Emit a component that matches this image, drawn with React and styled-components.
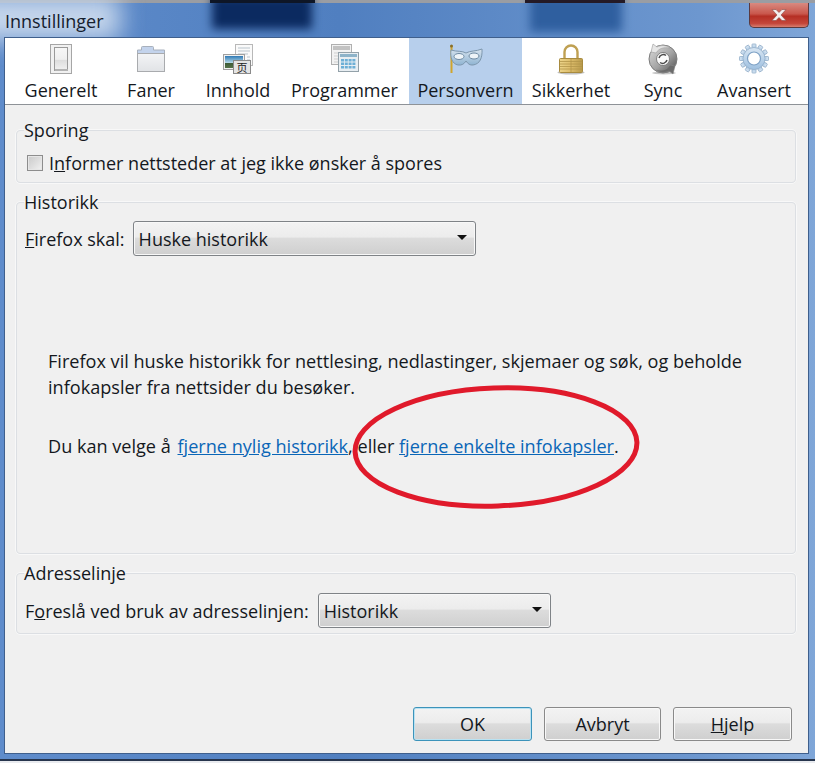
import React from 'react';
import styled, { createGlobalStyle } from 'styled-components';

const GlobalStyle = createGlobalStyle`
  html, body { margin: 0; padding: 0; background: #dfe3ea; }
  body { font-family: "Open Sans", "Noto Sans", sans-serif; color: #111; }
`;

const Desktop = styled.div`
  position: relative;
  width: 815px;
  height: 763px;
  overflow: hidden;
  box-sizing: border-box;
  padding: 3px 7px 3px 5px;
  background:
    linear-gradient(#9a9da3 0 3px, transparent 3px),
    linear-gradient(#e9ebef, #e9ebef) 0 761px / 100% 2px no-repeat,
    linear-gradient(#27354d, #27354d) 0 759px / 100% 2px no-repeat,
    linear-gradient(90deg, #5f8ccb, #507fc0 340px, #6d97cf 700px, #7fa6d8);
`;

// blurred desktop picture that shows through the glass title bar
const Blotch = styled.div`
  position: absolute;
  left: ${({ $x }) => $x}px;
  top: -4px;
  width: ${({ $w }) => $w}px;
  height: ${({ $h }) => $h}px;
  background: ${({ $c }) => $c};
  filter: blur(${({ $blur }) => $blur || 5}px);
`;

const TopEdge = styled.div`
  position: absolute;
  left: ${({ $x }) => $x}px;
  top: 0;
  width: ${({ $w }) => $w}px;
  height: 3px;
  background: ${({ $c }) => $c};
`;

const TitleBar = styled.div`
  position: relative;
  height: 35px;
  display: flex;
  align-items: flex-start;
  justify-content: space-between;
`;

const Title = styled.div`
  font-size: 18px;
  line-height: 36px;
  color: #15202e;
`;

const CloseButton = styled.div`
  width: 60px;
  height: 25px;
  margin-right: -1px;
  box-sizing: border-box;
  display: flex;
  align-items: center;
  justify-content: center;
  border: 1px solid #5a3a3f;
  border-top: none;
  border-radius: 0 0 5px 5px;
  background: linear-gradient(#d98a80 0, #c9574c 45%, #b52f24 55%, #c4463a 85%, #d77f70 100%);
`;

const Client = styled.div`
  position: relative;
  height: 715px;
  display: flex;
  flex-direction: column;
  background: #f0f0f0;
  box-shadow: 0 0 0 1px #3f5f8c;
`;

const Toolbar = styled.div`
  display: flex;
  height: 66px;
  padding-left: 11px;
  background: #fff;
  border-bottom: 1px solid #8e9297;
`;

const ToolItem = styled.div`
  width: ${({ $w }) => $w}px;
  display: flex;
  flex-direction: column;
  align-items: center;
  background: ${({ $active }) => ($active ? '#b7cfec' : 'transparent')};
  svg { display: block; margin-top: 5px; }
`;

const ToolLabel = styled.span`
  font-size: 18px;
  line-height: 24px;
  margin-top: 3px;
  white-space: nowrap;
  color: #14181d;
`;

const Panel = styled.div`
  flex: 1;
  display: flex;
  flex-direction: column;
  padding: 12px 12px 12px 11px;
  gap: 6px;
`;

const Group = styled.fieldset`
  margin: 0;
  padding: ${({ $top }) => $top}px 8px 0;
  height: ${({ $h }) => $h}px;
  box-sizing: border-box;
  min-width: 0;
  border: 1px solid #dcdfe3;
  border-radius: 4px;
  box-shadow: 0 0 0 0.5px #fff;
`;

const Legend = styled.legend`
  padding: 0;
  margin-left: -1px;
  font-size: 18px;
  line-height: 26px;
  color: #14181d;
`;

const Row = styled.div`
  display: flex;
  align-items: center;
  gap: ${({ $gap }) => $gap || 8}px;
  font-size: 18px;
  line-height: 24px;
  color: #14181d;
  white-space: nowrap;
`;

const Check = styled.span`
  width: 16px;
  height: 16px;
  margin-left: 2px;
  box-sizing: border-box;
  border: 1px solid #8d8d8d;
  background: linear-gradient(135deg, #c9c9c9, #f1f1f1);
  box-shadow: inset 0 0 0 1px #e6e6e6;
`;

const Select = styled.div`
  width: ${({ $w }) => $w}px;
  height: 35px;
  box-sizing: border-box;
  padding: 0 8px 0 5px;
  display: flex;
  align-items: center;
  justify-content: space-between;
  border: 1px solid #7f8387;
  border-radius: 3px;
  background: linear-gradient(#f3f3f3 0, #ececec 45%, #dcdcdc 50%, #cfcfcf 100%);
  box-shadow: inset 0 0 0 1px #f8f8f8;
  font-size: 18px;
`;

const Arrow = styled.span`
  width: 0;
  height: 0;
  margin-top: -3px;
  border-left: 5px solid transparent;
  border-right: 5px solid transparent;
  border-top: 5px solid #111;
`;

const Info = styled.div`
  margin: 92px 0 0 23px;
  font-size: 18.1px;
  line-height: 26px;
  color: #14181d;
`;

const Para = styled.p`
  margin: 0 0 33px;
  white-space: nowrap;
`;

const Link = styled.a`
  margin-left: ${({ $ml }) => $ml || 0}px;
  color: #0a66b7;
  text-decoration: underline;
`;

const Footer = styled.div`
  display: flex;
  justify-content: flex-end;
  gap: 12px;
  margin-top: auto;
  padding-right: 4px;
`;

const Button = styled.div`
  width: ${({ $w }) => $w}px;
  height: 34px;
  box-sizing: border-box;
  display: flex;
  align-items: center;
  justify-content: center;
  border: 1px solid ${({ $primary }) => ($primary ? '#3c93ba' : '#8a8a8a')};
  border-radius: 3px;
  background: linear-gradient(#f3f3f3 0, #ececec 45%, #dcdcdc 50%, #cfcfcf 100%);
  box-shadow: inset 0 0 0 1px ${({ $primary }) => ($primary ? '#b9e2f2' : '#f8f8f8')};
  font-size: 18px;
  color: #14181d;
`;

const Ellipse = styled.svg`
  position: absolute;
  left: 345px;
  top: 378px;
  pointer-events: none;
`;

const SwitchIcon = () => (
  <svg width="32" height="32" viewBox="0 0 32 32">
    <defs>
      <linearGradient id="sw" x1="0" y1="0" x2="0" y2="1">
        <stop offset="0" stopColor="#f7f7f7" />
        <stop offset="0.52" stopColor="#efefef" />
        <stop offset="0.53" stopColor="#dcdcdc" />
        <stop offset="1" stopColor="#f2f2f2" />
      </linearGradient>
    </defs>
    <rect x="5.500" y="1.500" width="21" height="29" fill="#f1f1f1" stroke="#a6a6a6" />
    <rect x="9.500" y="4.500" width="13" height="23" fill="url(#sw)" stroke="#9a9a9a" />
    <rect x="10" y="26" width="13" height="2" fill="#b3b3b3" />
  </svg>
);

const FolderIcon = () => (
  <svg width="32" height="32" viewBox="0 0 32 32">
    <defs>
      <linearGradient id="fo" x1="0" y1="0" x2="0" y2="1">
        <stop offset="0" stopColor="#f3f4f6" />
        <stop offset="1" stopColor="#e1e3e6" />
      </linearGradient>
    </defs>
    <path d="M6.500 7V4.500a1 1 0 0 1 1-1h10a1 1 0 0 1 1 1V7h11v4h-27V7z" fill="#c3d3ec" stroke="#a8b0bc" />
    <rect x="2.500" y="10.500" width="27" height="18" fill="url(#fo)" stroke="#a9abae" />
  </svg>
);

const ContentIcon = () => (
  <svg width="32" height="32" viewBox="0 0 32 32">
    <defs>
      <linearGradient id="ph" x1="0" y1="0" x2="0" y2="1">
        <stop offset="0" stopColor="#2f79b5" />
        <stop offset="0.55" stopColor="#b3d8e6" />
        <stop offset="0.6" stopColor="#3c5b36" />
        <stop offset="1" stopColor="#56734a" />
      </linearGradient>
    </defs>
    <rect x="13.500" y="1.500" width="17" height="21" fill="#fafafa" stroke="#b8b8b8" />
    <path d="M16 5h12M16 8h12M16 11h10M25 14h3M25 17h3" stroke="#b9c4cc" />
    <rect x="1.500" y="11.500" width="21" height="15" fill="#f2f2f2" stroke="#a0a0a0" />
    <rect x="3" y="13" width="18" height="12" fill="url(#ph)" />
    <rect x="11.500" y="17.500" width="17" height="13" fill="#e4e4e4" stroke="#8a8a8a" />
    <text x="20" y="28.500" fontSize="11" textAnchor="middle" fontFamily="Noto Sans CJK SC, sans-serif" fill="#222">页</text>
  </svg>
);

const AppsIcon = () => (
  <svg width="32" height="32" viewBox="0 0 32 32">
    <rect x="2.500" y="1.500" width="20" height="20" fill="#f2f2f2" stroke="#b0b0b0" />
    <rect x="4" y="3" width="17" height="4" fill="#c2c2c2" />
    <path d="M5 10h4M5 13h4M5 16h4M5 19h4" stroke="#cfcfcf" />
    <rect x="9.500" y="9.500" width="20" height="19" fill="#e8eef2" stroke="#93a1a9" />
    <rect x="11" y="11" width="17" height="3" fill="#8db3c9" />
    <g fill="#6dafd6">
      {[0, 1, 2].map((r) =>
        [0, 1, 2, 3].map((c) => (
          <rect key={`${r}-${c}`} x={12 + c * 3.8} y={16 + r * 3.5} width="3" height="2.500" />
        ))
      )}
    </g>
  </svg>
);

const MaskIcon = () => (
  <svg width="34" height="32" viewBox="0 0 34 32">
    <defs>
      <linearGradient id="ma" x1="0" y1="0" x2="0" y2="1">
        <stop offset="0" stopColor="#d7e3ee" />
        <stop offset="1" stopColor="#8fb4d2" />
      </linearGradient>
    </defs>
    <path d="M2.500 3v27" stroke="#d0a52c" strokeWidth="2" />
    <circle cx="2.500" cy="3" r="1.500" fill="#8a6f28" />
    <path d="M2 7c6 2 11 .5 15 3 4-2.500 10-1.500 16-4 .5 9-2 15-9 16-3 .4-5-1-7-4-2 3-4 4.500-8 4-6-1-8-8-7-15z" fill="url(#ma)" stroke="#7d97ad" />
    <ellipse cx="10" cy="13.500" rx="5" ry="3" fill="#eef4f8" stroke="#6f8ba3" />
    <ellipse cx="25" cy="13" rx="5" ry="3" fill="#eef4f8" stroke="#6f8ba3" />
  </svg>
);

const LockIcon = () => (
  <svg width="32" height="32" viewBox="0 0 32 32">
    <defs>
      <linearGradient id="lo" x1="0" y1="0" x2="1" y2="0">
        <stop offset="0" stopColor="#ecd48a" />
        <stop offset="0.5" stopColor="#dcbc6a" />
        <stop offset="1" stopColor="#b89a4c" />
      </linearGradient>
    </defs>
    <ellipse cx="16" cy="29.500" rx="13.500" ry="2" fill="#c2c2c2" />
    <path d="M9.500 16V9a6.500 6.500 0 0 1 13 0v7" fill="none" stroke="#bfa052" strokeWidth="2.400" />
    <rect x="4.500" y="15.500" width="23" height="14" rx="1" fill="url(#lo)" stroke="#a88b3f" />
    <path d="M5 18.500h22M5 21h22M5 23.500h22M5 26h22M16 16v13" stroke="#b3954a" strokeWidth="0.800" />
  </svg>
);

const SyncIcon = () => (
  <svg width="32" height="32" viewBox="0 0 32 32">
    <defs>
      <linearGradient id="sy" x1="0" y1="0" x2="1" y2="1">
        <stop offset="0" stopColor="#dedede" />
        <stop offset="0.55" stopColor="#a2a2a2" />
        <stop offset="1" stopColor="#4a4a4a" />
      </linearGradient>
    </defs>
    <ellipse cx="17" cy="30" rx="12" ry="1.500" fill="#c6c6c6" />
    <circle cx="16" cy="16" r="14" fill="url(#sy)" stroke="#7c7c7c" />
    <path d="M4 9L6 1l4 3c4-2 9-2 13 1-6-1-11 0-14 5z" fill="#e6e6e6" stroke="#9a9a9a" strokeWidth="0.600" />
    <path d="M28 23l-2 8-4-3c-4 2-9 2-13-1 6 1 11 0 14-5z" fill="#6b6b6b" stroke="#8a8a8a" strokeWidth="0.600" />
    <circle cx="16" cy="16" r="6.500" fill="#fbfbfb" stroke="#6c6c6c" strokeWidth="0.800" />
    <path d="M12 15a4.500 4.500 0 0 1 7-2.500M20 17a4.500 4.500 0 0 1-7 2.500" fill="none" stroke="#4c4c4c" strokeWidth="1.500" />
  </svg>
);

const GearIcon = () => (
  <svg width="32" height="32" viewBox="0 0 32 32">
    <defs>
      <linearGradient id="ge" x1="0" y1="0" x2="0" y2="1">
        <stop offset="0" stopColor="#d8e6f3" />
        <stop offset="1" stopColor="#9fc0e0" />
      </linearGradient>
    </defs>
    <g stroke="#93aec9" strokeWidth="0.800" fill="url(#ge)">
      {[0, 1, 2, 3, 4, 5, 6, 7, 8, 9, 10, 11].map((i) => (
        <rect key={i} x="14" y="1" width="4" height="6" rx="0.600" transform={`rotate(${i * 30} 16 15.500)`} />
      ))}
      <circle cx="16" cy="15.500" r="11" />
    </g>
    <circle cx="16" cy="15.500" r="6.500" fill="#fff" stroke="#7fa2c6" strokeWidth="1.200" />
  </svg>
);

const tools = [
  { label: 'Generelt', w: 90, Icon: SwitchIcon },
  { label: 'Faner', w: 90, Icon: FolderIcon },
  { label: 'Innhold', w: 84, Icon: ContentIcon },
  { label: 'Programmer', w: 129, Icon: AppsIcon },
  { label: 'Personvern', w: 113, Icon: MaskIcon, active: true },
  { label: 'Sikkerhet', w: 98, Icon: LockIcon },
  { label: 'Sync', w: 86, Icon: SyncIcon },
  { label: 'Avansert', w: 96, Icon: GearIcon },
];

function App() {
  return (
    <>
      <GlobalStyle />
      <Desktop>
        <Blotch $x={-30} $w={150} $h={44} $c="#c7d7ec" $blur={12} />
        <Blotch $x={212} $w={100} $h={33} $c="#0b2a60" />
        <Blotch $x={530} $w={92} $h={36} $c="#2f5f9f" />
        <TopEdge $x={210} $w={105} $c="#0e1626" />
        <TopEdge $x={525} $w={100} $c="#241a26" />
        <TitleBar>
          <Title>Innstillinger</Title>
          <CloseButton>
            <svg width="20" height="14" viewBox="0 0 20 14">
              <path d="M3 1.500h4l3 3 3-3h4l-5 5.500 5 5.500h-4l-3-3-3 3H3l5-5.500z" fill="#f4efee" stroke="#8d4a45" strokeWidth="0.600" />
            </svg>
          </CloseButton>
        </TitleBar>
        <Client>
          <Toolbar>
            {tools.map(({ label, w, Icon, active }) => (
              <ToolItem key={label} $w={w} $active={active}>
                <Icon />
                <ToolLabel>{label}</ToolLabel>
              </ToolItem>
            ))}
          </Toolbar>
          <Panel>
            <Group $h={66} $top={8}>
              <Legend>Sporing</Legend>
              <Row $gap={6}>
                <Check />
                <span>I<u>n</u>former nettsteder at jeg ikke ønsker å spores</span>
              </Row>
            </Group>
            <Group $h={365} $top={6}>
              <Legend>Historikk</Legend>
              <Row>
                <span><u>F</u>irefox skal:</span>
                <Select $w={343}>Huske historikk<Arrow /></Select>
              </Row>
              <Info>
                <Para>
                  Firefox vil huske historikk for nettlesing, nedlastinger, skjemaer og søk, og beholde<br />
                  infokapsler fra nettsider du besøker.
                </Para>
                <Para>
                  Du kan velge å <Link $ml={2}>fjerne nylig historikk</Link>, eller <Link>fjerne enkelte infokapsler</Link>.
                </Para>
              </Info>
            </Group>
            <Group $h={74} $top={7}>
              <Legend>Adresselinje</Legend>
              <Row $gap={9}>
                <span>F<u>o</u>reslå ved bruk av adresselinjen:</span>
                <Select $w={233}>Historikk<Arrow /></Select>
              </Row>
            </Group>
            <Footer>
              <Button $w={119} $primary>OK</Button>
              <Button $w={117}>Avbryt</Button>
              <Button $w={119}><span><u>H</u>jelp</span></Button>
            </Footer>
          </Panel>
        </Client>
        <Ellipse width="304" height="140" viewBox="0 0 304 140">
          <ellipse cx="151" cy="69" rx="141" ry="59" fill="none" stroke="#e01a2b" strokeWidth="5" transform="rotate(-2 151 69)" />
        </Ellipse>
      </Desktop>
    </>
  );
}

export default App;
